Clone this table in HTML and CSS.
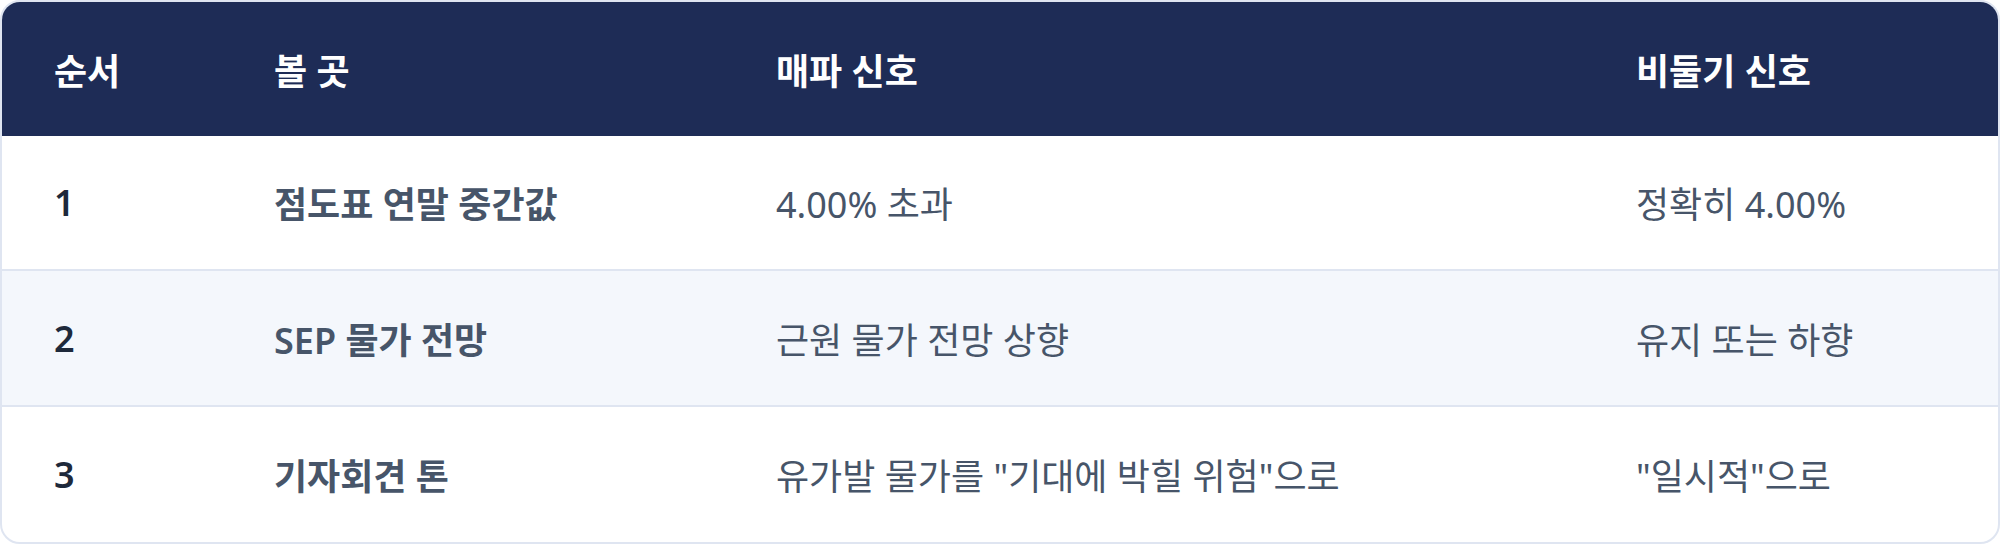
FILE: index.html
```html
<!DOCTYPE html>
<html lang="ko">
<head>
<meta charset="utf-8">
<link rel="stylesheet" href="styles.css">
</head>
<body>
<div class="card">
  <table class="signals">
    <colgroup>
      <col class="c1"><col class="c2"><col class="c3"><col class="c4">
    </colgroup>
    <thead>
      <tr><th>순서</th><th>볼 곳</th><th>매파 신호</th><th>비둘기 신호</th></tr>
    </thead>
    <tbody>
      <tr><td class="num">1</td><td class="what">점도표 연말 중간값</td><td>4.00% 초과</td><td>정확히 4.00%</td></tr>
      <tr class="alt"><td class="num">2</td><td class="what">SEP 물가 전망</td><td>근원 물가 전망 상향</td><td>유지 또는 하향</td></tr>
      <tr><td class="num">3</td><td class="what">기자회견 톤</td><td>유가발 물가를 "기대에 박힐 위험"으로</td><td>"일시적"으로</td></tr>
    </tbody>
  </table>
</div>
</body>
</html>
```
FILE: styles.css
```css
html, body {
  margin: 0;
  padding: 0;
  background: #ffffff;
}
body {
  font-family: "Noto Sans", "Noto Sans CJK KR", sans-serif;
}
.card {
  width: 2000px;
  height: 544px;
  box-sizing: border-box;
  border: 2px solid #dfe5f1;
  border-radius: 20px;
  overflow: hidden;
  background: #ffffff;
}
.signals {
  width: 100%;
  border-collapse: collapse;
  table-layout: fixed;
}
.c1 { width: 220px; }
.c2 { width: 502px; }
.c3 { width: 860px; }
.c4 { width: auto; }
.signals th {
  background: #1e2c56;
  color: #ffffff;
  font-weight: 700;
  font-size: 36px;
  text-align: left;
  height: 134px;
  padding: 0 0 0 52px;
  box-sizing: border-box;
  vertical-align: middle;
}
.signals td {
  height: 134px;
  padding: 0 0 0 52px;
  box-sizing: border-box;
  font-size: 36px;
  color: #475569;
  vertical-align: middle;
  white-space: nowrap;
}
.signals tbody tr + tr td {
  border-top: 2px solid #dfe5f1;
  height: 136px;
}
.signals tr.alt td {
  background: #f4f7fc;
}
.signals td.num {
  color: #1e293b;
  font-weight: 600;
}
.signals td.what {
  font-weight: 600;
}
```
